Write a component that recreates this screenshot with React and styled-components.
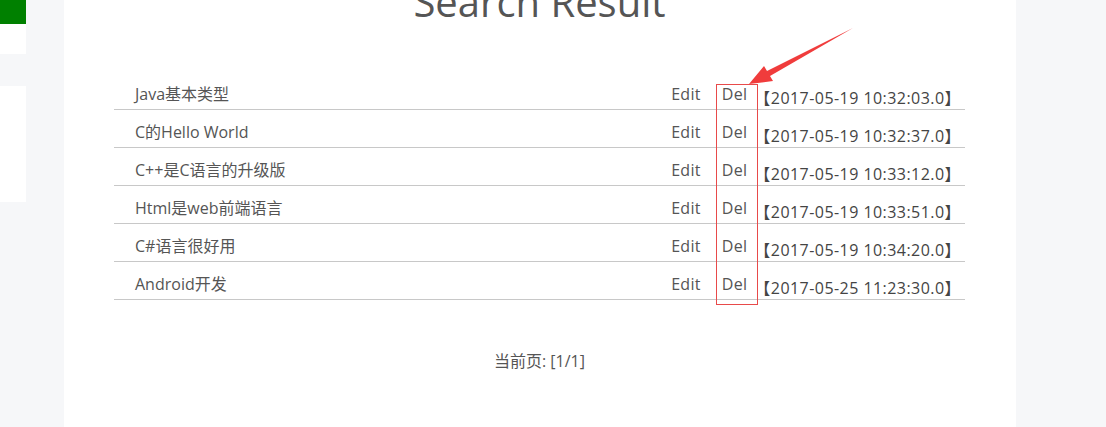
import styled, { createGlobalStyle } from 'styled-components';

const GlobalStyle = createGlobalStyle`
  html, body {
    margin: 0;
    padding: 0;
    background: #f6f7f9;
  }
  body {
    font-family: "Open Sans", "Noto Sans CJK SC", sans-serif;
    color: #555;
    overflow: hidden;
  }
`;

const articles = [
  { id: 1, title: 'Java基本类型', date: '2017-05-19 10:32:03.0' },
  { id: 2, title: 'C的Hello World', date: '2017-05-19 10:32:37.0' },
  { id: 3, title: 'C++是C语言的升级版', date: '2017-05-19 10:33:12.0' },
  { id: 4, title: 'Html是web前端语言', date: '2017-05-19 10:33:51.0' },
  { id: 5, title: 'C#语言很好用', date: '2017-05-19 10:34:20.0' },
  { id: 6, title: 'Android开发', date: '2017-05-25 11:23:30.0' },
];

export default function App() {
  return (
    <>
      <GlobalStyle />
      <Page>
        <Sidebar>
          <SideBlock $color="#008000" $height={24} />
          <SideBlock $color="#fff" $height={30} />
          <SideGap />
          <SideBlock $color="#fff" $height={116} />
        </Sidebar>
        <Panel>
          <Title>Search Result</Title>
          <Table>
            {articles.map((item) => (
              <Row key={item.id}>
                <Name>{item.title}</Name>
                <Action>Edit</Action>
                <Action $del>Del</Action>
                <Date>【{item.date}】</Date>
              </Row>
            ))}
            <Highlight />
            <Arrow width="120" height="70" viewBox="0 0 120 70">
              <polygon
                points="1,64 16,46 19,51 105,8 22,56 25,61"
                fill="#f03c3c"
              />
            </Arrow>
          </Table>
          <Pager>当前页: [1/1]</Pager>
        </Panel>
      </Page>
    </>
  );
}

const Page = styled.div`
  display: flex;
  align-items: flex-start;
  height: 427px;
`;

const Sidebar = styled.aside`
  display: flex;
  flex-direction: column;
  width: 26px;
  margin-right: 38px;
`;

const SideBlock = styled.div`
  height: ${(props) => props.$height}px;
  background: ${(props) => props.$color};
`;

const SideGap = styled.div`
  height: 32px;
`;

const Panel = styled.main`
  width: 952px;
  height: 427px;
  background: #fff;
  padding: 0 51px 0 50px;
  box-sizing: border-box;
`;

const Title = styled.h1`
  margin: -23px 0 0;
  font-size: 40px;
  font-weight: 400;
  line-height: 50px;
  text-align: center;
  color: #555;
`;

const Table = styled.div`
  position: relative;
  margin-top: 45px;
`;

const Row = styled.div`
  display: flex;
  align-items: flex-end;
  height: 38px;
  box-sizing: border-box;
  border-bottom: 1px solid #c8c8c8;
  font-size: 16px;
  line-height: 22px;
`;

const Name = styled.span`
  flex: 1;
  padding-left: 21px;
  margin-bottom: 4px;
`;

const Action = styled.span`
  margin-bottom: 4px;
  padding: ${(props) => (props.$del ? '0 7px 0 7px' : '0 14px 0 0')};
  letter-spacing: 0.3px;
`;

const Date = styled.span`
  color: #444;
  letter-spacing: 0.45px;
  padding-right: 4px;
`;

const Highlight = styled.div`
  position: absolute;
  left: 602px;
  top: 12px;
  width: 40px;
  height: 219px;
  border: 1px solid #e84a4a;
`;

const Arrow = styled.svg`
  position: absolute;
  left: 634px;
  top: -52px;
`;

const Pager = styled.div`
  margin-top: 50px;
  font-size: 16px;
  line-height: 22px;
  text-align: center;
`;
